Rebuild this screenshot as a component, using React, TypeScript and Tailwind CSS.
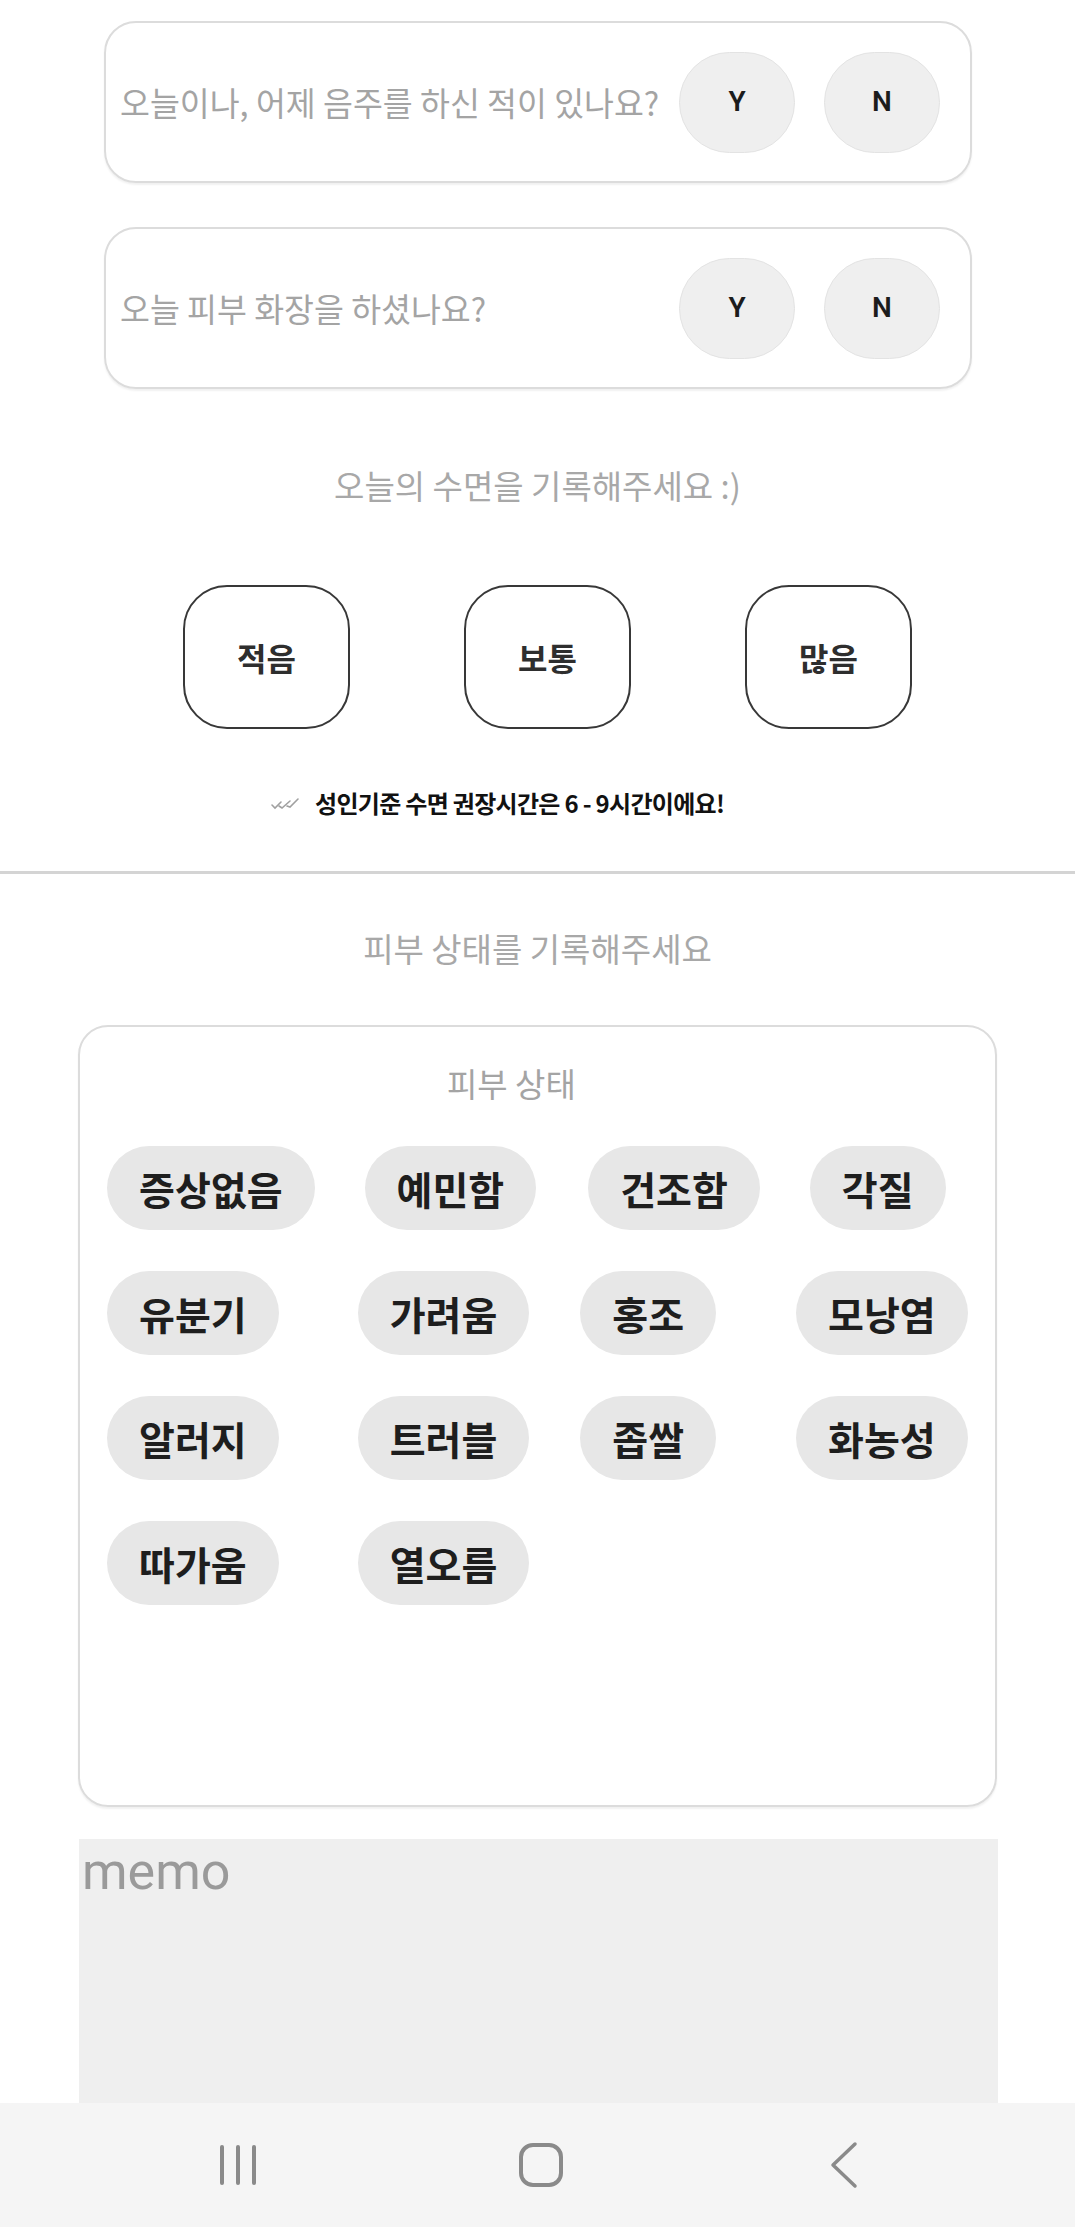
const kr = "font-['Noto_Sans_CJK_KR',_'Noto_Sans',_sans-serif]";

type Chip = { label: string; ml: string };

const chipRows: Chip[][] = [
  [
    { label: "증상없음", ml: "" },
    { label: "예민함", ml: "ml-[50px]" },
    { label: "건조함", ml: "ml-[52px]" },
    { label: "각질", ml: "ml-[50px]" },
  ],
  [
    { label: "유분기", ml: "" },
    { label: "가려움", ml: "ml-[79px]" },
    { label: "홍조", ml: "ml-[51px]" },
    { label: "모낭염", ml: "ml-[80px]" },
  ],
  [
    { label: "알러지", ml: "" },
    { label: "트러블", ml: "ml-[79px]" },
    { label: "좁쌀", ml: "ml-[51px]" },
    { label: "화농성", ml: "ml-[80px]" },
  ],
  [
    { label: "따가움", ml: "" },
    { label: "열오름", ml: "ml-[79px]" },
  ],
];

function Question({ text, className }: { text: string; className?: string }) {
  return (
    <div
      className={`ml-[104px] w-[868px] h-[162px] border-2 border-[#dcdcdc] rounded-[32px] flex items-center pl-[14px] pr-[30px] shadow-[0_2px_2px_rgba(0,0,0,0.06)] ${className ?? ""}`}
    >
      <div className={`${kr} flex-1 text-[32.5px] leading-none text-[#a4a4a4]`}>{text}</div>
      <div className="flex gap-[29px]">
        {["Y", "N"].map(l => (
          <div
            key={l}
            className="w-[116px] h-[101px] rounded-full bg-[#efefef] border border-[#e3e3e3] flex items-center justify-center font-['Roboto',_sans-serif] font-semibold text-[28px] text-[#1c1c1c]"
          >
            {l}
          </div>
        ))}
      </div>
    </div>
  );
}

export default function App() {
  return (
    <div className={`w-[1075px] h-[2227px] bg-white flex flex-col overflow-hidden ${kr}`}>
      <div className="pt-[21px]">
        <Question text="오늘이나, 어제 음주를 하신 적이 있나요?" />
        <Question text="오늘 피부 화장을 하셨나요?" className="mt-[44px]" />
      </div>

      {/* sleep */}
      <div className="mt-[77px] h-[40px] flex items-center justify-center text-[33px] text-[#a8a8a8]">
        오늘의 수면을 기록해주세요 :)
      </div>
      <div className="mt-[79px] flex pl-[183px] gap-[114px]">
        {["적음", "보통", "많음"].map(s => (
          <div
            key={s}
            className="w-[167px] h-[144px] border-[2.5px] border-[#383838] rounded-[44px] flex items-center justify-center text-[32px] font-semibold text-[#2e2e2e]"
          >
            {s}
          </div>
        ))}
      </div>
      <div className="mt-[59px] h-[30px] flex items-center pl-[270px]">
        <svg width="30" height="14" viewBox="0 0 30 14" fill="none" stroke="#a0a0a0" strokeWidth="1.6" strokeLinecap="round">
          <path d="M2 9 L5 12 L11 6" />
          <path d="M9 10 L12 12 L20 5" />
          <path d="M17 10 L20 11 L28 3" />
        </svg>
        <span className="ml-[15px] text-[24px] font-bold text-[#111] tracking-[-0.7px]">
          성인기준 수면 권장시간은 6 - 9시간이에요!
        </span>
      </div>

      <div className="mt-[53px] h-[3px] bg-[#d4d4d4]" />

      {/* skin */}
      <div className="mt-[55px] h-[40px] flex items-center justify-center text-[33px] text-[#a8a8a8]">
        피부 상태를 기록해주세요
      </div>
      <div className="mt-[56px] ml-[78px] w-[919px] h-[782px] border-2 border-[#dcdcdc] rounded-[30px] shadow-[0_2px_2px_rgba(0,0,0,0.06)] pt-[37px] pl-[27px]">
        <div className="h-[40px] flex items-center pl-[340px] text-[33px] text-[#a4a4a4]">피부 상태</div>
        <div className="mt-[42px] flex flex-col gap-[41px]">
          {chipRows.map((row, i) => (
            <div key={i} className="flex">
              {row.map(c => (
                <div
                  key={c.label}
                  className={`${c.ml} h-[84px] px-[32px] rounded-full bg-[#e7e7e7] flex items-center text-[39px] font-bold text-[#1e1e1e]`}
                >
                  {c.label}
                </div>
              ))}
            </div>
          ))}
        </div>
      </div>

      {/* memo */}
      <div className="mt-[32px] ml-[79px] w-[919px] flex-1 bg-[#efefef] pt-[7px] pl-[3px]">
        <div className="font-['Roboto',_sans-serif] text-[52px] leading-none text-[#9a9a9a]">memo</div>
      </div>

      {/* nav bar */}
      <div className="h-[124px] bg-[#f5f5f5] flex items-center">
        <svg className="ml-[218px]" width="42" height="44" viewBox="0 0 42 44" fill="none" stroke="#8a8a8a" strokeWidth="4" strokeLinecap="round">
          <path d="M4 4 V40" />
          <path d="M20 4 V40" />
          <path d="M36 4 V40" />
        </svg>
        <svg className="ml-[258px]" width="46" height="46" viewBox="0 0 46 46" fill="none" stroke="#8a8a8a" strokeWidth="4">
          <rect x="3" y="3" width="40" height="40" rx="12" />
        </svg>
        <svg className="ml-[265px]" width="30" height="48" viewBox="0 0 30 48" fill="none" stroke="#8a8a8a" strokeWidth="3.5" strokeLinecap="round" strokeLinejoin="round">
          <path d="M26 3 L4 24 L26 45" />
        </svg>
      </div>
    </div>
  );
}
